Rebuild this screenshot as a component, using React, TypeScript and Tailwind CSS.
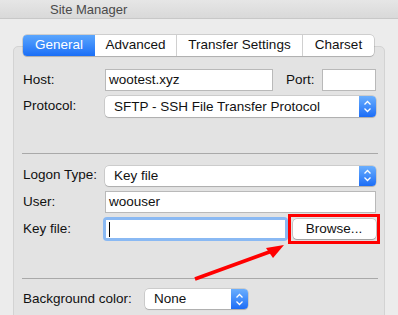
import { ReactNode } from "react";

const font = "font-['Helvetica_Neue','Liberation_Sans',Arial,sans-serif]";

function Stepper() {
    return (
        <div className="flex h-full w-[17px] shrink-0 flex-col items-center justify-center rounded-r-[4px] bg-gradient-to-b from-[#6aaefd] to-[#1b6cf6]">
            <svg width="9" height="13" viewBox="0 0 9 13" fill="none">
                <path d="M1.5 4.5 L4.5 1.5 L7.5 4.5" stroke="white" strokeWidth="1.3" />
                <path d="M1.5 8.5 L4.5 11.5 L7.5 8.5" stroke="white" strokeWidth="1.3" />
            </svg>
        </div>
    );
}

function Select({ value, className }: { value: string; className: string }) {
    return (
        <div className={`flex shrink-0 items-stretch rounded-[4px] bg-white shadow-[0_0_0_0.5px_rgba(0,0,0,0.2),0_1px_1px_rgba(0,0,0,0.15)] ${className}`}>
            <span className="flex-1 self-center pl-[9px] text-[13.5px] leading-none text-[#111]">{value}</span>
            <Stepper />
        </div>
    );
}

function TextBox({ value, className }: { value?: string; className: string }) {
    return (
        <div className={`flex shrink-0 items-center border border-[#b9b9b9] bg-white pl-[3px] text-[13.5px] text-[#111] ${className}`}>
            {value}
        </div>
    );
}

function Row({ label, children, className, labelWidth = "w-[82px]" }: { label: string; children: ReactNode; className: string; labelWidth?: string }) {
    return (
        <div className={`flex items-center ${className}`}>
            <span className={`${labelWidth} shrink-0 whitespace-nowrap text-[13.5px] text-[#111]`}>{label}</span>
            {children}
        </div>
    );
}

const tabs = ["General", "Advanced", "Transfer Settings", "Charset"];
const tabWidths = ["w-[72px]", "w-[81px]", "w-[126px]", "w-[72px]"];

export default function App() {
    return (
        <div className={`relative h-[315px] w-[398px] overflow-hidden bg-[#ececec] ${font}`}>
            {/* Title bar */}
            <div className="flex h-[19px] items-end border-b border-[#c8c8c8] bg-gradient-to-b from-[#e6e6e6] to-[#d9d9d9] pl-[50px]">
                <span className="mb-[2px] text-[13px] leading-none text-[#4a4a4a]">Site Manager</span>
            </div>

            <div className="pl-[13px] pr-[13px]">
                {/* Tabs */}
                <div className="relative z-10 ml-[10px] mt-[16px] flex h-[21px] w-fit overflow-hidden rounded-[4px] bg-white shadow-[0_0_0_0.5px_rgba(0,0,0,0.25),0_1px_1px_rgba(0,0,0,0.12)]">
                    {tabs.map((t, i) => (
                        <div
                            key={t}
                            className={`flex items-center justify-center text-[13.5px] ${tabWidths[i]} ${
                                i === 0
                                    ? "bg-gradient-to-b from-[#5aa5fd] to-[#1a6ef6] text-white"
                                    : "text-[#111]"
                            } ${i > 1 ? "border-l border-[#d0d0d0]" : ""}`}
                        >
                            {t}
                        </div>
                    ))}
                </div>

                {/* Panel */}
                <div className="-mt-[10px] h-[300px] w-[372px] rounded-[5px] border border-[#d3d3d3] bg-[#e3e3e3] pl-[9px] pr-[2px] pt-[22px]">
                    <Row label="Host:" className="h-[22px]">
                        <TextBox value="wootest.xyz" className="h-[22px] w-[168px]" />
                        <span className="ml-[13px] text-[13.5px] text-[#111]">Port:</span>
                        <TextBox className="ml-[7px] h-[22px] w-[54px]" />
                    </Row>
                    <Row label="Protocol:" className="mt-[5px] h-[21px]">
                        <Select value="SFTP - SSH File Transfer Protocol" className="h-[21px] w-[271px]" />
                    </Row>

                    <div className="ml-[-1px] mt-[36px] h-px w-[356px] bg-[#a9a9a9]" />

                    <Row label="Logon Type:" className="mt-[11px] h-[21px]">
                        <Select value="Key file" className="h-[20px] w-[271px]" />
                    </Row>
                    <Row label="User:" className="mt-[5px] h-[22px]">
                        <TextBox value="woouser" className="h-[22px] w-[271px]" />
                    </Row>
                    <Row label="Key file:" className="mt-[4px] h-[24px]">
                        <div className="-ml-[2px] flex h-[24px] w-[185px] shrink-0 items-center rounded-[4px] bg-[#8ab9f3] p-[3px]">
                            <div className="flex h-full w-full items-center bg-white pl-[3px]">
                                <span className="h-[15px] w-px bg-black" />
                            </div>
                        </div>
                        <div className="flex h-[30px] w-[92px] shrink-0 items-center justify-center border-[3px] border-[#ff0000]">
                            <div className="flex h-[20px] w-[83px] items-center justify-center rounded-[4px] bg-white text-[13.5px] text-[#111] shadow-[0_0_0_0.5px_rgba(0,0,0,0.25),0_1px_1px_rgba(0,0,0,0.2)]">
                                Browse...
                            </div>
                        </div>
                    </Row>

                    <div className="ml-[-1px] mt-[37px] h-px w-[356px] bg-[#a9a9a9]" />

                    <Row label="Background color:" labelWidth="w-[122px]" className="mt-[10px] h-[20px]">
                        <Select value="None" className="h-[20px] w-[103px]" />
                    </Row>
                </div>
            </div>

            {/* Annotation arrow */}
            <svg className="pointer-events-none absolute left-0 top-0" width="398" height="315">
                <line x1="195" y1="279" x2="272" y2="251" stroke="#ff0000" strokeWidth="3.5" />
                <polygon points="284,245 266,248 273,258" fill="#ff0000" />
            </svg>
        </div>
    );
}
